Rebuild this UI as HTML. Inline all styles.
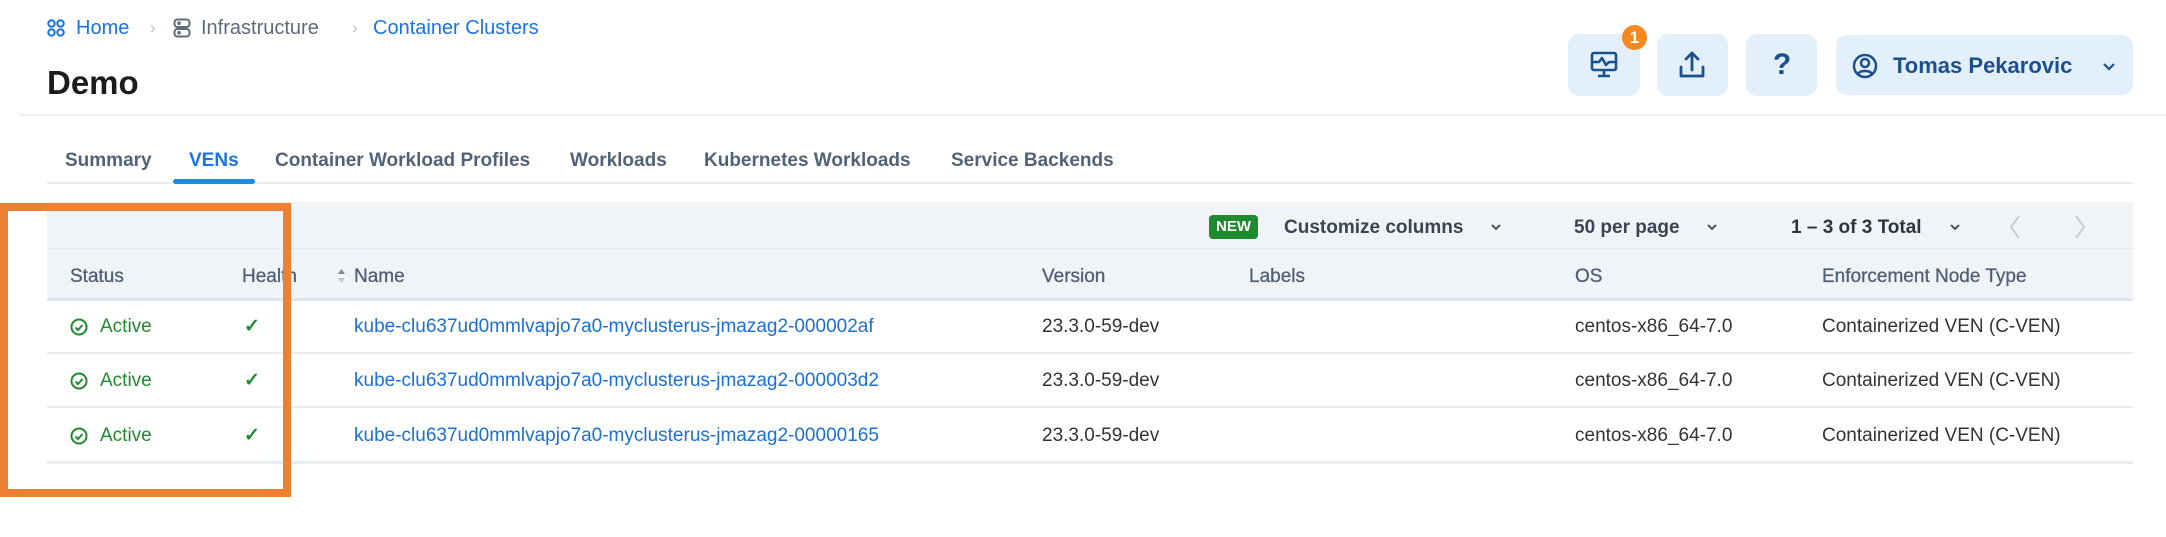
<!DOCTYPE html>
<html><head><meta charset="utf-8"><style>
*{margin:0;padding:0;box-sizing:border-box}
body{width:2166px;height:537px;background:#fff;font-family:"Liberation Sans",Arial,sans-serif;position:relative;overflow:hidden;color:#333}
.a{position:absolute;white-space:nowrap}
.bc{top:16px;font-size:20px;line-height:24px}
.btn{position:absolute;top:34px;height:62px;background:#e3f0fc;border-radius:11px}
.tab{top:149px;font-size:19px;font-weight:bold;color:#526277;line-height:24px}
.th{top:265px;font-size:19px;color:#4f5f74;line-height:24px;-webkit-text-stroke:0.3px #4f5f74}
.td{font-size:19px;line-height:24px;color:#333}
.hl{position:absolute;left:47px;width:2086px;height:2px;background:#e8edf2}
.act{color:#1f8a2e}
.lnk{color:#1a6fd8}
.tb{top:216px;font-size:19px;color:#3a4554;line-height:24px}
</style></head><body>
<svg class="a" style="left:47px;top:19px" width="18" height="18" viewBox="0 0 18 18" fill="none" stroke="#1a73e8" stroke-width="2"><circle cx="4.5" cy="4.5" r="3.2"/><circle cx="13.5" cy="4.5" r="3.2"/><circle cx="4.5" cy="13.5" r="3.2"/><circle cx="13.5" cy="13.5" r="3.2"/></svg>
<div class="a bc" style="left:76px;color:#1a73e8">Home</div>
<div class="a bc" style="left:150px;color:#b8c2cc;font-size:17px">&#x203A;</div>
<svg class="a" style="left:173px;top:18px" width="18" height="20" viewBox="0 0 18 20" fill="none" stroke="#5e6b7a" stroke-width="2"><rect x="1.5" y="1.5" width="15" height="7.5" rx="3"/><rect x="1.5" y="11" width="15" height="7.5" rx="3"/><circle cx="6" cy="5.2" r="0.8"/><circle cx="6" cy="14.7" r="0.8"/></svg>
<div class="a bc" style="left:201px;color:#5e6b7a">Infrastructure</div>
<div class="a bc" style="left:352px;color:#b8c2cc;font-size:17px">&#x203A;</div>
<div class="a bc" style="left:373px;color:#1a73e8">Container Clusters</div>
<div class="a" style="left:47px;top:64px;font-size:33px;font-weight:bold;color:#1c1c1c;line-height:38px">Demo</div>
<div class="btn" style="left:1568px;width:72px"></div>
<svg class="a" style="left:1589px;top:50px" width="30" height="30" viewBox="0 0 30 30" fill="none" stroke="#1b4f8f" stroke-width="2.6" stroke-linejoin="round"><rect x="3" y="3" width="24" height="17" rx="2"/><path d="M4 12h6l3-4 4 7 3-3h6"/><path d="M15 20v5M9 26h12"/></svg>
<div class="a" style="left:1622px;top:25px;width:25px;height:25px;border-radius:50%;background:#f5881f;color:#fff;font-size:17px;font-weight:bold;text-align:center;line-height:25px">1</div>
<div class="btn" style="left:1657px;width:71px"></div>
<svg class="a" style="left:1677px;top:50px" width="30" height="30" viewBox="0 0 30 30" fill="none" stroke="#1b4f8f" stroke-width="2.8" stroke-linecap="round" stroke-linejoin="round"><path d="M15 20V3M9 9l6-6 6 6"/><path d="M4 17v9h22v-9"/></svg>
<div class="btn" style="left:1746px;width:71px"></div>
<div class="a" style="left:1770px;top:48px;font-size:30px;font-weight:bold;color:#1b4f8f;width:24px;text-align:center;line-height:34px">?</div>
<div class="btn" style="left:1836px;width:297px;top:35px;height:60px"></div>
<svg class="a" style="left:1852px;top:53px" width="26" height="26" viewBox="0 0 26 26" fill="none" stroke="#1b4f8f" stroke-width="2.5"><circle cx="13" cy="13" r="11"/><circle cx="13" cy="10" r="4"/><path d="M6 21c2-4 12-4 14 0"/></svg>
<div class="a" style="left:1893px;top:52px;font-size:22px;font-weight:bold;color:#1b4f8f;line-height:28px">Tomas Pekarovic</div>
<svg class="a" style="left:2102px;top:62px" width="14" height="10" viewBox="0 0 14 10" fill="none" stroke="#1b4f8f" stroke-width="2.2"><path d="M2 2l5 5 5-5"/></svg>
<div class="a" style="left:20px;top:114px;width:2146px;height:2px;background:#eef1f5"></div>
<div class="a tab" style="left:65px">Summary</div>
<div class="a tab" style="left:189px;color:#1a73e8">VENs</div>
<div class="a tab" style="left:275px">Container Workload Profiles</div>
<div class="a tab" style="left:570px">Workloads</div>
<div class="a tab" style="left:704px">Kubernetes Workloads</div>
<div class="a tab" style="left:951px">Service Backends</div>
<div class="hl" style="top:182px"></div>
<div class="a" style="left:173px;top:179px;width:82px;height:5px;border-radius:3px;background:#1a8de0"></div>
<div class="a" style="left:47px;top:202px;width:2086px;height:48px;background:#f1f4f7;border-bottom:2px solid #e6ebf0"></div>
<div class="a" style="left:1209px;top:215px;width:49px;height:24px;background:#1e8a2e;border-radius:4px;color:#fff;font-size:15px;font-weight:bold;text-align:center;line-height:24px">NEW</div>
<div class="a tb" style="left:1284px;font-weight:bold">Customize columns</div>
<svg class="a" style="left:1490px;top:223px" width="12" height="8" viewBox="0 0 12 8" fill="none" stroke="#3a4554" stroke-width="1.8"><path d="M2 2l4 4 4-4"/></svg>
<div class="a tb" style="left:1574px;font-weight:bold">50 per page</div>
<svg class="a" style="left:1706px;top:223px" width="12" height="8" viewBox="0 0 12 8" fill="none" stroke="#3a4554" stroke-width="1.8"><path d="M2 2l4 4 4-4"/></svg>
<div class="a tb" style="left:1791px;font-weight:bold;color:#2a3542">1 – 3 of 3 Total</div>
<svg class="a" style="left:1949px;top:223px" width="12" height="8" viewBox="0 0 12 8" fill="none" stroke="#3a4554" stroke-width="1.8"><path d="M2 2l4 4 4-4"/></svg>
<svg class="a" style="left:2008px;top:214px" width="14" height="26" viewBox="0 0 14 26" fill="none" stroke="#c5ced8" stroke-width="2"><path d="M11 2L3 13l8 11"/></svg>
<svg class="a" style="left:2073px;top:214px" width="14" height="26" viewBox="0 0 14 26" fill="none" stroke="#c5ced8" stroke-width="2"><path d="M3 2l8 11-8 11"/></svg>
<div class="a" style="left:47px;top:251px;width:2086px;height:50px;background:#f1f4f7;border-bottom:3px solid #dfe5ec"></div>
<div class="a th" style="left:70px">Status</div>
<div class="a th" style="left:242px">Health</div>
<svg class="a" style="left:337px;top:268px" width="9" height="16" viewBox="0 0 9 16"><path d="M4.5 1L8 6H1z" fill="#7a8797"/><path d="M4.5 15L8 10H1z" fill="#c2cad4"/></svg>
<div class="a th" style="left:354px">Name</div>
<div class="a th" style="left:1042px">Version</div>
<div class="a th" style="left:1249px">Labels</div>
<div class="a th" style="left:1575px">OS</div>
<div class="a th" style="left:1822px">Enforcement Node Type</div>
<div class="hl" style="top:352px"></div>
<div class="hl" style="top:406px"></div>
<div class="hl" style="top:461px;height:3px"></div>
<div class="a" style="left:0;top:315px;width:2166px">
<svg class="a" style="left:70px;top:3px" width="18" height="18" viewBox="0 0 18 18" fill="none" stroke="#1f8a2e" stroke-width="2"><circle cx="9" cy="9" r="7.5"/><path d="M5.5 9.5l2.5 2.5 4.5-5"/></svg>
<div class="a td act" style="left:100px">Active</div>
<div class="a td act" style="left:244px;font-weight:bold">&#x2713;</div>
<div class="a td lnk" style="left:354px">kube-clu637ud0mmlvapjo7a0-myclusterus-jmazag2-000002af</div>
<div class="a td" style="left:1042px">23.3.0-59-dev</div>
<div class="a td" style="left:1575px">centos-x86_64-7.0</div>
<div class="a td" style="left:1822px">Containerized VEN (C-VEN)</div>
</div>
<div class="a" style="left:0;top:369px;width:2166px">
<svg class="a" style="left:70px;top:3px" width="18" height="18" viewBox="0 0 18 18" fill="none" stroke="#1f8a2e" stroke-width="2"><circle cx="9" cy="9" r="7.5"/><path d="M5.5 9.5l2.5 2.5 4.5-5"/></svg>
<div class="a td act" style="left:100px">Active</div>
<div class="a td act" style="left:244px;font-weight:bold">&#x2713;</div>
<div class="a td lnk" style="left:354px">kube-clu637ud0mmlvapjo7a0-myclusterus-jmazag2-000003d2</div>
<div class="a td" style="left:1042px">23.3.0-59-dev</div>
<div class="a td" style="left:1575px">centos-x86_64-7.0</div>
<div class="a td" style="left:1822px">Containerized VEN (C-VEN)</div>
</div>
<div class="a" style="left:0;top:424px;width:2166px">
<svg class="a" style="left:70px;top:3px" width="18" height="18" viewBox="0 0 18 18" fill="none" stroke="#1f8a2e" stroke-width="2"><circle cx="9" cy="9" r="7.5"/><path d="M5.5 9.5l2.5 2.5 4.5-5"/></svg>
<div class="a td act" style="left:100px">Active</div>
<div class="a td act" style="left:244px;font-weight:bold">&#x2713;</div>
<div class="a td lnk" style="left:354px">kube-clu637ud0mmlvapjo7a0-myclusterus-jmazag2-00000165</div>
<div class="a td" style="left:1042px">23.3.0-59-dev</div>
<div class="a td" style="left:1575px">centos-x86_64-7.0</div>
<div class="a td" style="left:1822px">Containerized VEN (C-VEN)</div>
</div>
<div class="a" style="left:0;top:203px;width:291px;height:294px;border:8px solid #ee8033"></div>
</body></html>
